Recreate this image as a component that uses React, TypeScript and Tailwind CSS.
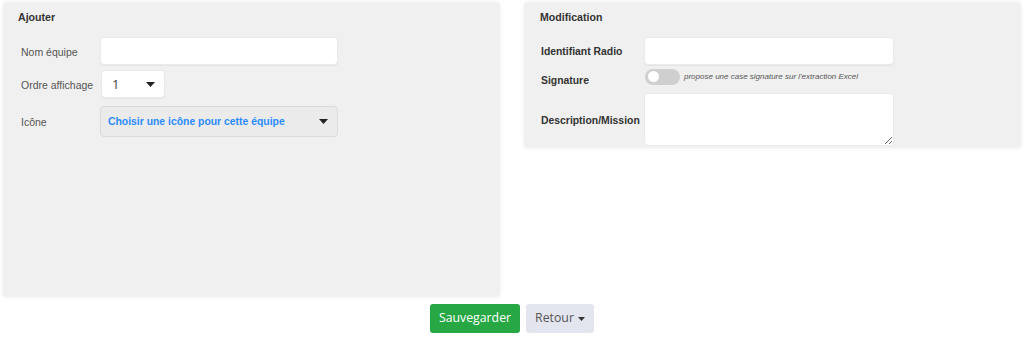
import React from "react";

const Caret = ({ className = "" }: { className?: string }) => (
  <svg width="9" height="5" viewBox="0 0 9 5" className={className}>
    <path d="M0 0 H9 L4.5 5 Z" fill="#222" />
  </svg>
);

export default function App() {
  const arial = { fontFamily: '"Liberation Sans", Arial, sans-serif' };
  return (
    <div className="w-[1024px] h-[337px] bg-white overflow-hidden" style={arial}>
      <div className="flex items-start gap-[24px] px-[3px] pt-[2px]">
        {/* Left panel */}
        <div className="w-[497px] h-[295px] bg-[#f0f0f0] rounded-[4px] shadow-[0_0_5px_rgba(0,0,0,0.07)] pt-[9px] pl-[15px]">
          <div className="h-[12px] leading-[12px] text-[10.6px] font-bold text-[#333]">Ajouter</div>
          <div className="mt-[14px] pl-[3px] flex flex-col">
            <div className="flex items-center h-[28px]">
              <div className="w-[79px] text-[10.5px] text-[#555] leading-[12px] pt-[1px]">Nom équipe</div>
              <div className="w-[238px] h-[28px] bg-white rounded-[4px] border border-[#eaeaea] shadow-[0_1px_1px_rgba(0,0,0,0.05)]" />
            </div>
            <div className="flex items-center h-[28px] mt-[5px]">
              <div className="w-[79px] text-[10.5px] text-[#555] leading-[12px] pt-[1px]">Ordre affichage</div>
              <div
                className="ml-[1px] w-[64px] h-[28px] bg-white rounded-[4px] border border-[#eaeaea] shadow-[0_1px_1px_rgba(0,0,0,0.05)] flex items-center justify-between pl-[10px] pr-[9px]"
                style={{ fontFamily: '"Open Sans", "Noto Sans", sans-serif' }}
              >
                <span className="text-[13px] text-[#444] leading-none">1</span>
                <Caret />
              </div>
            </div>
            <div className="flex items-center h-[31px] mt-[8px]">
              <div className="w-[79px] text-[10.5px] text-[#555] leading-[12px] pt-[1px]">Icône</div>
              <div className="w-[238px] h-[31px] bg-[#ebebeb] rounded-[4px] border border-[#dadada] flex items-center justify-between pl-[7px] pr-[9px]">
                <span className="text-[10.4px] font-bold text-[#2b8bff] leading-[12px]">Choisir une icône pour cette équipe</span>
                <Caret />
              </div>
            </div>
          </div>
        </div>

        {/* Right panel */}
        <div className="w-[497px] h-[146px] bg-[#f0f0f0] rounded-[4px] shadow-[0_0_5px_rgba(0,0,0,0.07)] pt-[9px] pl-[16px]">
          <div className="h-[12px] leading-[12px] text-[10.6px] font-bold text-[#333]">Modification</div>
          <div className="mt-[14px] pl-[1px] flex flex-col">
            <div className="flex items-center h-[28px]">
              <div className="w-[103px] text-[10.4px] font-bold text-[#333] leading-[12px] pt-[1px]">Identifiant Radio</div>
              <div className="w-[250px] h-[28px] bg-white rounded-[4px] border border-[#eaeaea] shadow-[0_1px_1px_rgba(0,0,0,0.05)]" />
            </div>
            <div className="flex items-start h-[17px] mt-[3px]">
              <div className="w-[104px] pt-[7px] text-[10.4px] font-bold text-[#333] leading-[12px]">Signature</div>
              <div className="flex items-center h-[17px]">
                <div className="w-[35px] h-[16px] rounded-full bg-[#cfcfcf] flex items-center pl-[3px]">
                  <div className="w-[11px] h-[11px] rounded-full bg-white" />
                </div>
                <span className="ml-[4px] text-[8px] italic text-[#555] leading-[10px]">
                  propose une case signature sur l'extraction Excel
                </span>
              </div>
            </div>
            <div className="flex items-center mt-[8px]">
              <div className="w-[103px] text-[10.4px] font-bold text-[#333] leading-[12px] pt-[2px]">Description/Mission</div>
              <textarea className="w-[250px] h-[53px] bg-white rounded-[4px] border border-[#eaeaea] outline-none block" />
            </div>
          </div>
        </div>
      </div>

      <div
        className="flex justify-center gap-[6px] mt-[7px]"
        style={{ fontFamily: '"Open Sans", "Noto Sans", sans-serif' }}
      >
        <div className="w-[90px] h-[29px] bg-[#28a745] rounded-[3px] flex items-center justify-center text-white text-[12.3px]">
          Sauvegarder
        </div>
        <div className="w-[68px] h-[29px] bg-[#e4e6ef] rounded-[3px] flex items-center justify-center gap-[4px] text-[#555] text-[12.3px]">
          <span>Retour</span>
          <svg width="7" height="4" viewBox="0 0 7 4">
            <path d="M0 0 H7 L3.5 4 Z" fill="#333" />
          </svg>
        </div>
      </div>
    </div>
  );
}
